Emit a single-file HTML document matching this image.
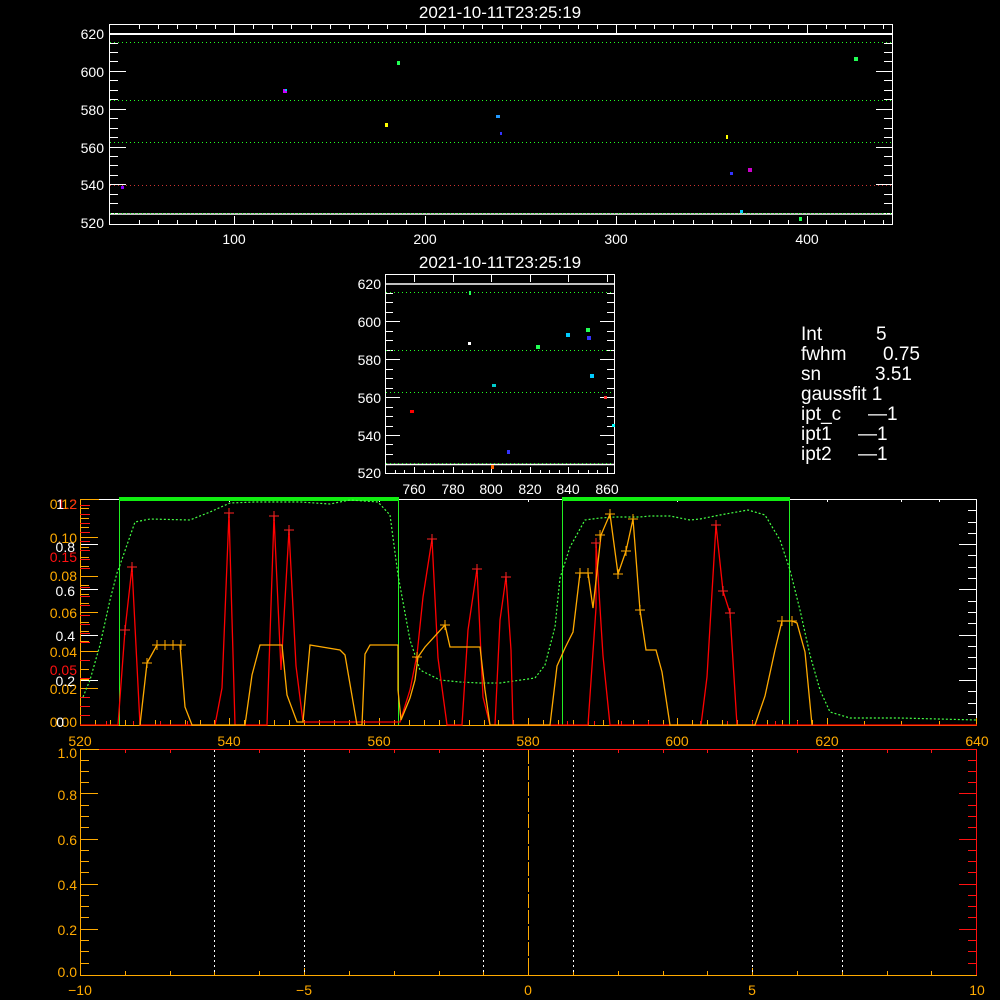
<!DOCTYPE html>
<html><head><meta charset="utf-8"><style>
html,body{margin:0;padding:0;background:#000;}
svg{display:block}
text{font-family:"Liberation Sans",sans-serif;}
</style></head><body>
<svg width="1000" height="1000" viewBox="0 0 1000 1000" xmlns="http://www.w3.org/2000/svg">
<rect width="1000" height="1000" fill="#000"/>

<!-- ===== TOP PLOT ===== -->
<text x="500" y="18" fill="#fff" font-size="17" text-anchor="middle">2021-10-11T23:25:19</text>
<rect x="109.5" y="24.5" width="783" height="200" fill="none" stroke="#fff" stroke-width="1"/>
<g stroke="#fff" stroke-width="1">
<line x1="109" y1="34" x2="893" y2="34" stroke-width="2"/>
<line x1="109" y1="214" x2="893" y2="214" stroke-width="1.5"/>
<!-- left y ticks -->
<path d="M110 71.5h16M110 109.5h16M110 147.5h16M110 184.5h16M110 61.5h8M110 52.5h8M110 43.5h8M110 80.5h8M110 90.5h8M110 99.5h8M110 118.5h8M110 128.5h8M110 137.5h8M110 156.5h8M110 165.5h8M110 175.5h8M110 194.5h8M110 203.5h8M110 213.5h8"/>
<path d="M892 71.5h-16M892 109.5h-16M892 147.5h-16M892 184.5h-16M892 61.5h-8M892 52.5h-8M892 43.5h-8M892 80.5h-8M892 90.5h-8M892 99.5h-8M892 118.5h-8M892 128.5h-8M892 137.5h-8M892 156.5h-8M892 165.5h-8M892 175.5h-8M892 194.5h-8M892 203.5h-8M892 213.5h-8"/>
<!-- x ticks -->
<path d="M234.5 224v-8M425.5 224v-8M616.5 224v-8M807.5 224v-8M234.5 25v8M425.5 25v8M616.5 25v8M807.5 25v8"/>
<path d="M139.5 224v-4M158.5 224v-4M177.5 224v-4M196.5 224v-4M215.5 224v-4M253.5 224v-4M272.5 224v-4M291.5 224v-4M311.5 224v-4M330.5 224v-4M349.5 224v-4M368.5 224v-4M387.5 224v-4M406.5 224v-4M444.5 224v-4M463.5 224v-4M482.5 224v-4M502.5 224v-4M521.5 224v-4M540.5 224v-4M559.5 224v-4M578.5 224v-4M597.5 224v-4M635.5 224v-4M654.5 224v-4M673.5 224v-4M693.5 224v-4M712.5 224v-4M731.5 224v-4M750.5 224v-4M769.5 224v-4M788.5 224v-4M826.5 224v-4M845.5 224v-4M864.5 224v-4M883.5 224v-4"/>
<path d="M139.5 25v4M158.5 25v4M177.5 25v4M196.5 25v4M215.5 25v4M253.5 25v4M272.5 25v4M291.5 25v4M311.5 25v4M330.5 25v4M349.5 25v4M368.5 25v4M387.5 25v4M406.5 25v4M444.5 25v4M463.5 25v4M482.5 25v4M502.5 25v4M521.5 25v4M540.5 25v4M559.5 25v4M578.5 25v4M597.5 25v4M635.5 25v4M654.5 25v4M673.5 25v4M693.5 25v4M712.5 25v4M731.5 25v4M750.5 25v4M769.5 25v4M788.5 25v4M826.5 25v4M845.5 25v4M864.5 25v4M883.5 25v4"/>
</g>
<g stroke-dasharray="1,3" stroke-width="1">
<line x1="110" y1="42.5" x2="892" y2="42.5" stroke="#2f2"/>
<line x1="110" y1="100.5" x2="892" y2="100.5" stroke="#2f2"/>
<line x1="110" y1="142.5" x2="892" y2="142.5" stroke="#2f2"/>
<line x1="110" y1="185.5" x2="892" y2="185.5" stroke="#c33"/>
<line x1="110" y1="213.5" x2="892" y2="213.5" stroke="#2f2"/>
</g>
<g font-size="14" fill="#fff" text-anchor="end">
<text x="104" y="39">620</text><text x="104" y="77">600</text><text x="104" y="115">580</text><text x="104" y="153">560</text><text x="104" y="190">540</text><text x="104" y="228">520</text>
</g>
<g font-size="14" fill="#fff" text-anchor="middle">
<text x="234" y="244">100</text><text x="425" y="244">200</text><text x="616" y="244">300</text><text x="807" y="244">400</text>
</g>
<g>
<rect x="283" y="89" width="4" height="4" fill="#c0f"/><rect x="285" y="89" width="2" height="2" fill="#0cf"/>
<rect x="397" y="61" width="3" height="4" fill="#2f5"/>
<rect x="385" y="123" width="3" height="4" fill="#ff0"/>
<rect x="496" y="115" width="4" height="3" fill="#29f"/>
<rect x="500" y="132" width="2" height="3" fill="#33f"/>
<rect x="726" y="135" width="2" height="4" fill="#ff0"/>
<rect x="730" y="172" width="3" height="3" fill="#33f"/>
<rect x="748" y="168" width="4" height="4" fill="#c0c"/>
<rect x="740" y="210" width="3" height="3" fill="#0cf"/>
<rect x="799" y="217" width="3" height="4" fill="#2f5"/>
<rect x="854" y="57" width="4" height="4" fill="#2f5"/>
<rect x="121" y="186" width="3" height="3" fill="#80f"/>
</g>

<!-- ===== SMALL PLOT ===== -->
<text x="500" y="268" fill="#fff" font-size="17" text-anchor="middle">2021-10-11T23:25:19</text>
<rect x="385.5" y="274.5" width="229" height="199" fill="none" stroke="#fff"/>
<g stroke="#fff">
<line x1="386" y1="284" x2="615" y2="284" stroke-width="1.5"/>
<line x1="386" y1="464.5" x2="615" y2="464.5" stroke-width="1.5"/>
<path d="M386 321.5h14M386 359.5h14M386 397.5h14M386 435.5h14M386 293.5h7M386 302.5h7M386 312.5h7M386 331.5h7M386 340.5h7M386 350.5h7M386 369.5h7M386 378.5h7M386 388.5h7M386 407.5h7M386 416.5h7M386 426.5h7M386 444.5h7M386 454.5h7"/>
<path d="M614 321.5h-14M614 359.5h-14M614 397.5h-14M614 435.5h-14M614 293.5h-7M614 302.5h-7M614 312.5h-7M614 331.5h-7M614 340.5h-7M614 350.5h-7M614 369.5h-7M614 378.5h-7M614 388.5h-7M614 407.5h-7M614 416.5h-7M614 426.5h-7M614 444.5h-7M614 454.5h-7"/>
<path d="M414.5 474v-7M453.5 474v-7M491.5 474v-7M530.5 474v-7M568.5 474v-7M607.5 474v-7M414.5 275v7M453.5 275v7M491.5 275v7M530.5 275v7M568.5 275v7M607.5 275v7"/>
<path d="M395.5 474v-4M404.5 474v-4M424.5 474v-4M433.5 474v-4M443.5 474v-4M462.5 474v-4M472.5 474v-4M482.5 474v-4M501.5 474v-4M511.5 474v-4M520.5 474v-4M540.5 474v-4M549.5 474v-4M559.5 474v-4M578.5 474v-4M588.5 474v-4M597.5 474v-4"/>
</g>
<g stroke-dasharray="1,3" stroke="#2f2">
<line x1="386" y1="292.5" x2="614" y2="292.5"/>
<line x1="386" y1="392.5" x2="614" y2="392.5"/>
</g>
<line x1="386" y1="350.5" x2="614" y2="350.5" stroke="#2f2" stroke-dasharray="1,3"/>
<line x1="386" y1="463.5" x2="614" y2="463.5" stroke="#2f2" stroke-dasharray="1,3"/>
<g font-size="14" fill="#fff" text-anchor="end">
<text x="381" y="289">620</text><text x="381" y="327">600</text><text x="381" y="365">580</text><text x="381" y="403">560</text><text x="381" y="441">540</text><text x="381" y="478">520</text>
</g>
<g font-size="14" fill="#fff" text-anchor="middle">
<text x="414" y="494">760</text><text x="453" y="494">780</text><text x="491" y="494">800</text><text x="530" y="494">820</text><text x="568" y="494">840</text><text x="607" y="494">860</text>
</g>
<g>
<rect x="469" y="291" width="2" height="4" fill="#2f5"/>
<rect x="468" y="342" width="3" height="3" fill="#fff"/>
<rect x="410" y="410" width="4" height="3" fill="#f00"/>
<rect x="492" y="384" width="4" height="3" fill="#0cc"/>
<rect x="491" y="465" width="3" height="4" fill="#f60"/>
<rect x="507" y="450" width="3" height="4" fill="#33f"/>
<rect x="536" y="345" width="4" height="4" fill="#2f5"/>
<rect x="566" y="333" width="4" height="4" fill="#0cf"/>
<rect x="586" y="328" width="4" height="4" fill="#2f5"/>
<rect x="587" y="336" width="4" height="4" fill="#33f"/>
<rect x="590" y="374" width="4" height="4" fill="#0cf"/>
<rect x="604" y="396" width="3" height="3" fill="#f33"/>
<rect x="612" y="424" width="3" height="3" fill="#0ff"/>
</g>

<!-- ===== TEXT PANEL ===== -->
<g font-size="19" fill="#fff" xml:space="preserve">
<text x="801" y="340">Int</text><text x="876" y="340">5</text>
<text x="801" y="360">fwhm</text><text x="883" y="360">0.75</text>
<text x="801" y="380">sn</text><text x="875" y="380">3.51</text>
<text x="801" y="400">gaussfit  1</text>
<text x="801" y="420">ipt_c</text><text x="868" y="420">—1</text>
<text x="801" y="440">ipt1</text><text x="858" y="440">—1</text>
<text x="801" y="460">ipt2</text><text x="858" y="460">—1</text>
</g>

<!-- ===== MIDDLE SPECTRAL PLOT ===== -->
<line x1="99" y1="499.5" x2="977" y2="499.5" stroke="#fff"/>
<line x1="976.5" y1="499" x2="976.5" y2="725" stroke="#fff"/>
<g stroke="#fff">
<path d="M977 544.5h-18M977 589.5h-18M977 635.5h-18M977 680.5h-18M977 510.5h-9M977 522.5h-9M977 533.5h-9M977 555.5h-9M977 567.5h-9M977 578.5h-9M977 601.5h-9M977 612.5h-9M977 623.5h-9M977 646.5h-9M977 657.5h-9M977 668.5h-9M977 714.5h-9M977 691.5h-9M977 703.5h-9"/>
<path d="M229.5 499v3M379.5 499v3M528.5 499v3M677.5 499v3M827.5 499v3M901.5 499v3M939.5 499v3M901.5 499v3"/>
<path d="M80 544.5h18M80 589.5h18M80 635.5h18M80 680.5h18"/>
</g>
<!-- left axis orange -->
<line x1="80.5" y1="499" x2="80.5" y2="725" stroke="#fa0"/>
<line x1="80" y1="499.5" x2="99" y2="499.5" stroke="#fa0"/>
<g stroke="#fa0">
<path d="M80 537.5h18M80 576.5h18M80 612.5h18M80 651.5h18M80 688.5h18M80 508.5h9M80 518.5h9M80 527.5h9M80 547.5h9M80 557.5h9M80 566.5h9M80 585.5h9M80 594.5h9M80 603.5h9M80 622.5h9M80 631.5h9M80 641.5h9M80 660.5h9M80 669.5h9M80 679.5h9M80 697.5h9M80 706.5h9M80 715.5h9"/>
</g>
<g stroke="#f11">
<path d="M80 505.5h10M80 514.5h10M80 523.5h10M80 532.5h10M80 541.5h10M80 550.5h10M80 559.5h10M80 568.5h10M80 587.5h10M80 596.5h10M80 605.5h10M80 615.5h10M80 624.5h10M80 633.5h10M80 642.5h10M80 660.5h10M80 678.5h10M80 697.5h10M80 706.5h10M80 715.5h10"/>
</g>
<line x1="80" y1="725.5" x2="977" y2="725.5" stroke="#fa0"/>
<g stroke="#fa0">
<path d="M229.5 725v-7M379.5 725v-7M528.5 725v-7M677.5 725v-7M827.5 725v-7M976.5 725v-7"/>
<path d="M95.5 725v-5M110.5 725v-5M125.5 725v-5M140.5 725v-5M155.5 725v-5M170.5 725v-5M185.5 725v-5M200.5 725v-5M214.5 725v-5M244.5 725v-5M259.5 725v-5M274.5 725v-5M289.5 725v-5M304.5 725v-5M319.5 725v-5M334.5 725v-5M349.5 725v-5M364.5 725v-5M394.5 725v-5M409.5 725v-5M424.5 725v-5M439.5 725v-5M454.5 725v-5M469.5 725v-5M484.5 725v-5M498.5 725v-5M513.5 725v-5M543.5 725v-5M558.5 725v-5M573.5 725v-5M588.5 725v-5M603.5 725v-5M618.5 725v-5M633.5 725v-5M648.5 725v-5M663.5 725v-5M692.5 725v-5M707.5 725v-5M722.5 725v-5M737.5 725v-5M752.5 725v-5M767.5 725v-5M782.5 725v-5M797.5 725v-5M812.5 725v-5M864.5 725v-4M901.5 725v-4M939.5 725v-4"/>
</g>
<g stroke="#f11">
<path d="M106.5 725v-4M133.5 725v-4M160.5 725v-4M187.5 725v-4M567.5 725v-4M594.5 725v-4M621.5 725v-4M648.5 725v-4M700.5 725v-4M727.5 725v-4M752.5 725v-4M775.5 725v-4M797.5 725v-4"/>
</g>
<!-- green boxes -->
<g stroke="#2e2" fill="none">
<line x1="119.5" y1="499" x2="119.5" y2="725"/>
<line x1="398.5" y1="499" x2="398.5" y2="725"/>
<line x1="562.5" y1="499" x2="562.5" y2="725"/>
<line x1="789.5" y1="499" x2="789.5" y2="725"/>
</g>
<rect x="119" y="497" width="280" height="4" fill="#1e1"/>
<rect x="562" y="497" width="228" height="4" fill="#1e1"/>
<!-- transmission curve -->
<polyline fill="none" stroke="#4f4" stroke-dasharray="2,2" stroke-width="1.2" points="83,697 90,680 100,645 110,600 117,573 120,565 135,522 150,519 190,520 210,512 230,503 255,502 300,502 330,504 350,500 378,502 390,515 398,575 410,640 420,670 440,680 460,682 480,683 500,683 535,678 545,665 555,627 560,578 570,547 585,520 600,518 615,517 640,517 650,516 670,516 690,520 700,519 720,515 748,510 765,515 780,540 790,570 800,610 810,655 820,690 830,712 850,718 900,718 977,720"/>
<!-- red curve -->
<polyline fill="none" stroke="#f00" stroke-width="1.3" points="80,725 118,725 125,630 132,567 140,725 215,725 222,688 229,513 235,725 267,725 274,516 281,670 289,530 296,666 303,722 400,722 410,690 417,655 423,597 432,539 438,658 447,725 462,725 468,630 477,569 483,697 490,725 495,725 500,620 506,577 511,650 513,725 588,725 596,608 596,543 603,656 610,725 701,725 707,677 716,525 723,591 730,613 737,725 977,725"/>
<!-- orange curve -->
<polyline fill="none" stroke="#fa0" stroke-width="1.3" points="140,725 147,663 157,645 170,645 180,645 185,707 192,725 245,725 252,675 260,645 282,645 287,695 297,722 303,722 310,645 340,650 345,655 357,725 362,725 365,654 370,645 398,645 398,690 401,720 410,698 415,680 418,657 425,647 445,625 450,647 480,647 485,690 490,725 550,725 557,666 565,648 573,632 580,573 588,573 593,608 601,535 610,514 618,574 626,551 633,519 640,610 646,650 656,650 662,672 670,725 755,725 765,696 775,650 782,621 792,621 797,623 805,652 812,725"/>
<!-- markers -->
<g stroke="#f22" stroke-width="1" fill="none">
<path d="M127 567h10M132 562v10M120 630h10M125 625v10M224 513h10M229 508v10M269 516h10M274 511v10M284 530h10M289 525v10M427 539h10M432 534v10M472 569h10M477 564v10M501 577h10M506 572v10M591 543h10M596 538v10M711 525h10M716 520v10M718 591h10M723 586v10M725 613h10M730 608v10"/>
</g>
<g stroke="#fa0" stroke-width="1" fill="none">
<path d="M152 645h10M157 640v10M160 645h10M165 640v10M168 645h10M173 640v10M176 645h10M181 640v10M142 663h10M147 658v10M605 514h10M610 509v10M628 519h10M633 514v10M575 573h10M580 568v10M583 573h10M588 568v10M621 551h10M626 546v10M777 621h10M782 616v10M787 621h10M792 616v10M595 535h10M600 530v10M613 574h10M618 569v10M635 610h10M640 605v10M440 625h10M445 620v10M412 657h10M417 652v10"/>
</g>
<!-- y labels -->
<g font-size="14" text-anchor="end">
<g fill="#fa0"><text x="77" y="509">0.12</text><text x="77" y="543">0.10</text><text x="77" y="581">0.08</text><text x="77" y="618">0.06</text><text x="77" y="657">0.04</text><text x="77" y="694">0.02</text><text x="77" y="727">0.00</text></g>
<g fill="#f11"><text x="77" y="562">0.15</text><text x="77" y="675">0.05</text><text x="77" y="509" fill-opacity="0.8">1.2</text></g>
<g fill="#fff"><text x="75" y="552">0.8</text><text x="75" y="596">0.6</text><text x="75" y="641">0.4</text><text x="75" y="686">0.2</text><text x="64" y="727">0</text><text x="64" y="509">1</text></g>
</g>
<g font-size="14" fill="#fa0" text-anchor="middle">
<text x="80" y="746">520</text><text x="229" y="746">540</text><text x="379" y="746">560</text><text x="528" y="746">580</text><text x="677" y="746">600</text><text x="827" y="746">620</text><text x="977" y="746">640</text>
</g>

<!-- ===== BOTTOM PLOT ===== -->
<line x1="80" y1="749.5" x2="977" y2="749.5" stroke="#f11"/>
<line x1="976.5" y1="749" x2="976.5" y2="975" stroke="#f11"/>
<line x1="80" y1="749.5" x2="99" y2="749.5" stroke="#fa0"/>
<line x1="80.5" y1="749" x2="80.5" y2="975" stroke="#fa0"/>
<line x1="80" y1="975.5" x2="977" y2="975.5" stroke="#fa0"/>
<g stroke="#fa0">
<path d="M80 793.5h18M80 839.5h18M80 884.5h18M80 929.5h18M80 760.5h9M80 771.5h9M80 782.5h9M80 805.5h9M80 816.5h9M80 827.5h9M80 850.5h9M80 861.5h9M80 872.5h9M80 895.5h9M80 906.5h9M80 917.5h9M80 940.5h9M80 951.5h9M80 963.5h9"/>
<path d="M304.5 975v-7M528.5 975v-7M752.5 975v-7M125.5 975v-4M170.5 975v-4M214.5 975v-4M259.5 975v-4M349.5 975v-4M394.5 975v-4M439.5 975v-4M483.5 975v-4M573.5 975v-4M618.5 975v-4M663.5 975v-4M707.5 975v-4M797.5 975v-4M842.5 975v-4M887.5 975v-4M931.5 975v-4"/>
</g>
<g stroke="#f11">
<path d="M977 793.5h-18M977 839.5h-18M977 884.5h-18M977 929.5h-18M977 760.5h-9M977 771.5h-9M977 782.5h-9M977 805.5h-9M977 816.5h-9M977 827.5h-9M977 850.5h-9M977 861.5h-9M977 872.5h-9M977 895.5h-9M977 906.5h-9M977 917.5h-9M977 940.5h-9M977 951.5h-9M977 963.5h-9"/>
<path d="M125.5 750v3M170.5 750v3M259.5 750v3M349.5 750v3M394.5 750v3M439.5 750v3M618.5 750v3M663.5 750v3M707.5 750v3M797.5 750v3M887.5 750v3M931.5 750v3"/>
</g>
<g stroke="#fff" stroke-dasharray="2,3">
<line x1="214.5" y1="750" x2="214.5" y2="975"/>
<line x1="304.5" y1="750" x2="304.5" y2="975"/>
<line x1="483.5" y1="750" x2="483.5" y2="975"/>
<line x1="573.5" y1="750" x2="573.5" y2="975"/>
<line x1="752.5" y1="750" x2="752.5" y2="975"/>
<line x1="842.5" y1="750" x2="842.5" y2="975"/>
</g>
<line x1="528.5" y1="750" x2="528.5" y2="975" stroke="#fa0" stroke-dasharray="14,2"/>
<g font-size="14" fill="#fa0" text-anchor="end">
<text x="77" y="758">1.0</text><text x="77" y="800">0.8</text><text x="77" y="845">0.6</text><text x="77" y="890">0.4</text><text x="77" y="935">0.2</text><text x="77" y="977">0.0</text>
</g>
<g font-size="14" fill="#fa0" text-anchor="middle">
<text x="80" y="995">−10</text><text x="304" y="995">−5</text><text x="528" y="995">0</text><text x="752" y="995">5</text><text x="977" y="995">10</text>
</g>
</svg>
</body></html>
